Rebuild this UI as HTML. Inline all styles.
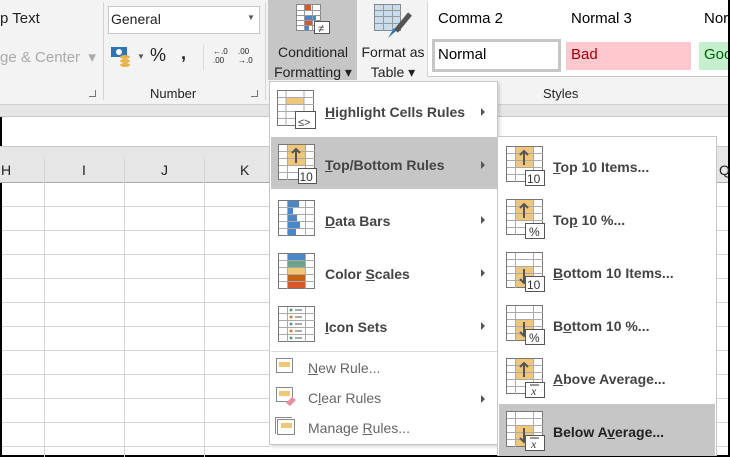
<!DOCTYPE html>
<html><head><meta charset="utf-8"><style>
*{margin:0;padding:0;box-sizing:border-box}
body{width:730px;height:457px;overflow:hidden;position:relative;background:#fff;font-family:"Segoe UI","Liberation Sans",sans-serif;color:#222}
.a{position:absolute}
.t{position:absolute;white-space:nowrap}
.mi{position:absolute;font-weight:bold;font-size:14px;color:#444;white-space:nowrap}
.mi u{text-decoration:underline}
.sm{position:absolute;font-size:14px;color:#666;white-space:nowrap}
.arr{position:absolute;width:0;height:0;border-left:4px solid #555;border-top:4px solid transparent;border-bottom:4px solid transparent}
</style></head><body>
<!-- ribbon -->
<div class="a" style="left:0;top:0;width:730px;height:105px;background:#f3f3f3"></div>
<div class="a" style="left:428px;top:0;width:302px;height:77px;background:#fff;border-bottom:1px solid #c6c6c6"></div>
<div class="a" style="left:103px;top:2px;width:1px;height:98px;background:#d5d5d5"></div>
<div class="a" style="left:265px;top:2px;width:1px;height:98px;background:#d5d5d5"></div>
<div class="a" style="left:427px;top:2px;width:1px;height:75px;background:#d5d5d5"></div>
<div class="t" style="left:0;top:10px;font-size:15px">p Text</div>
<div class="t" style="left:0;top:48px;font-size:15px;color:#aaa">ge &amp; Center &nbsp;▾</div>
<div class="a" style="left:89px;top:90px;width:7px;height:7px;border-right:1px solid #777;border-bottom:1px solid #777"></div>
<div class="a" style="left:108px;top:6px;width:152px;height:28px;background:#fff;border:1px solid #c6c6c6"></div>
<div class="t" style="left:111px;top:11px;font-size:14px">General</div>
<div class="t" style="left:247px;top:13px;font-size:8px;color:#555">▼</div>
<svg class="a" style="left:110px;top:44px" width="26" height="24"><rect x="1" y="3" width="16" height="10" fill="#2e74b5"/><circle cx="9" cy="8" r="3" fill="#fff"/><ellipse cx="15" cy="13" rx="5" ry="2" fill="#e8b34a"/><ellipse cx="15" cy="17" rx="5" ry="2" fill="#e8b34a"/><ellipse cx="15" cy="21" rx="5" ry="2" fill="#e8b34a"/></svg>
<div class="t" style="left:137px;top:52px;font-size:8px;color:#555">▼</div>
<div class="t" style="left:150px;top:45px;font-size:18px">%</div>
<div class="t" style="left:181px;top:43px;font-size:18px;font-weight:bold">,</div>
<div class="a" style="left:203px;top:45px;width:1px;height:25px;background:#ddd"></div>
<div class="t" style="left:213px;top:47px;font-size:8px;line-height:9px">←.0<br>.00</div>
<div class="t" style="left:238px;top:47px;font-size:8px;line-height:9px">.00<br>→.0</div>
<div class="t" style="left:150px;top:86px;font-size:13px">Number</div>
<div class="a" style="left:251px;top:90px;width:7px;height:7px;border-right:1px solid #777;border-bottom:1px solid #777"></div>
<!-- CF button -->
<div class="a" style="left:268px;top:0;width:89px;height:80px;background:#c6c6c6"></div>
<svg class="a" style="left:296px;top:4px" width="38" height="31"><g fill="#fff" stroke="#888"><rect x="0.5" y="0.5" width="24" height="26"/></g><rect x="9" y="1" width="6" height="5" fill="#d9582b"/><rect x="9" y="11" width="11" height="5" fill="#4a86c8"/><rect x="9" y="16" width="7" height="5" fill="#d9582b"/><rect x="9" y="21" width="4" height="5" fill="#4a86c8"/><g stroke="#999"><path d="M8.5 1v26M16.5 1v26M1 6.5h24M1 11.5h24M1 16.5h24M1 21.5h24"/></g><rect x="18.5" y="17.5" width="15" height="12" fill="#fff" stroke="#555"/><text x="22" y="28" font-size="11" fill="#333" font-family="Liberation Sans">≠</text></svg>
<div class="t" style="left:273px;top:42px;font-size:14px;line-height:20px;text-align:center;width:80px">Conditional<br>Formatting ▾</div>
<svg class="a" style="left:374px;top:4px" width="40" height="36"><rect x="0.5" y="0.5" width="26" height="26" fill="#c9dcee" stroke="#888"/><g stroke="#999"><path d="M9.5 1v26M18.5 1v26M1 6.5h26M1 12.5h26M1 19.5h26"/></g><path d="M36 10 L22 27" stroke="#555" stroke-width="5"/><path d="M22 27 L14 34 L20 24Z" fill="#2e74b5"/></svg>
<div class="t" style="left:359px;top:42px;font-size:14px;line-height:20px;text-align:center;width:68px">Format as<br>Table ▾</div>
<!-- styles -->
<div class="t" style="left:438px;top:10px;font-size:15px;color:#000">Comma 2</div>
<div class="t" style="left:571px;top:10px;font-size:15px;color:#000">Normal 3</div>
<div class="t" style="left:704px;top:10px;font-size:15px;color:#000">Nor</div>
<div class="a" style="left:432px;top:39px;width:129px;height:33px;border:3px solid #c6c6c6;background:#fff"></div>
<div class="t" style="left:438px;top:46px;font-size:15px;color:#000">Normal</div>
<div class="a" style="left:566px;top:42px;width:125px;height:28px;background:#ffc7ce"></div>
<div class="t" style="left:571px;top:46px;font-size:15px;color:#9c0006">Bad</div>
<div class="a" style="left:699px;top:42px;width:31px;height:28px;background:#c6efce"></div>
<div class="t" style="left:704px;top:46px;font-size:15px;color:#006100">Goo</div>
<div class="t" style="left:543px;top:86px;font-size:13px">Styles</div>
<!-- strips -->
<div class="a" style="left:0;top:104px;width:730px;height:13px;background:#e6e6e6;border-top:1px solid #d0d0d0;border-bottom:1px solid #c6c6c6"></div>
<div class="a" style="left:0;top:117px;width:2px;height:340px;background:#000"></div>
<div class="a" style="left:728px;top:0;width:2px;height:457px;background:#000"></div>
<div class="a" style="left:0;top:455px;width:730px;height:2px;background:#000"></div>
<div class="a" style="left:0;top:146px;width:728px;height:37px;background:#e6e6e6;border-top:1px solid #c6c6c6;border-bottom:1px solid #aaa"></div>
<div class="t" style="left:1px;top:162px;font-size:14px">H</div>
<div class="t" style="left:82px;top:162px;font-size:14px">I</div>
<div class="t" style="left:161px;top:162px;font-size:14px">J</div>
<div class="t" style="left:240px;top:162px;font-size:14px">K</div>
<div class="t" style="left:719px;top:162px;font-size:14px">Q</div>
<div class="a" style="left:44px;top:159px;width:1px;height:298px;background:#d4d4d4"></div>
<div class="a" style="left:124px;top:159px;width:1px;height:298px;background:#d4d4d4"></div>
<div class="a" style="left:204px;top:159px;width:1px;height:298px;background:#d4d4d4"></div>
<div class="a" style="left:2px;top:183px;width:268px;height:272px;background:repeating-linear-gradient(to bottom,transparent 0,transparent 23px,#d4d4d4 23px,#d4d4d4 24px)"></div>
<div class="a" style="left:716px;top:183px;width:12px;height:272px;background:repeating-linear-gradient(to bottom,transparent 0,transparent 23px,#d4d4d4 23px,#d4d4d4 24px)"></div>
<!-- menu 1 -->
<div class="a" style="left:269px;top:81px;width:229px;height:364px;background:#fff;border:1px solid #c6c6c6;box-shadow:2px 2px 3px rgba(0,0,0,.15)"></div>
<div class="a" style="left:271px;top:137px;width:227px;height:52px;background:#c6c6c6"></div>
<svg class="a" style="left:277px;top:90px" width="40" height="40"><rect x="0.5" y="0.5" width="36" height="35" fill="#fff" stroke="#777"/><rect x="9" y="7" width="18" height="7" fill="#f0c77a"/><g stroke="#aaa"><path d="M9 1v35M27 1v35M1 7.5h36M1 14.5h36M1 21.5h36M1 28.5h36"/></g><rect x="18.5" y="21.5" width="20" height="17" fill="#fff" stroke="#555"/><text x="21" y="36" font-size="11" fill="#444">≤&gt;</text></svg>
<div class="mi" style="left:325px;top:104px"><u>H</u>ighlight Cells Rules</div><div class="arr" style="left:481px;top:108px"></div>
<svg class="a" style="left:278px;top:144px" width="40" height="40"><rect x="0.5" y="0.5" width="36" height="35" fill="#fff" stroke="#777"/><rect x="10" y="1" width="17" height="20" fill="#f0c77a"/><g stroke="#aaa"><path d="M9.5 1v35M27.5 1v35M1 7.5h36M1 14.5h36M1 21.5h36M1 28.5h36"/></g><path d="M18 19V5M14 9l4-4 4 4" stroke="#555" stroke-width="2" fill="none"/><rect x="20.5" y="24.5" width="18" height="15" fill="#fff" stroke="#555"/><text x="21.5" y="37" font-size="12" fill="#333">10</text></svg>
<div class="mi" style="left:325px;top:157px"><u>T</u>op/Bottom Rules</div><div class="arr" style="left:481px;top:161px"></div>
<svg class="a" style="left:278px;top:200px" width="38" height="38"><rect x="0.5" y="0.5" width="36" height="35" fill="#fff" stroke="#777"/><g fill="#4a86c8"><rect x="10" y="1" width="11" height="6"/><rect x="10" y="8" width="5" height="6"/><rect x="10" y="15" width="9" height="6"/><rect x="10" y="22" width="12" height="6"/><rect x="10" y="29" width="8" height="6"/></g><g stroke="#aaa"><path d="M9.5 1v35M27.5 1v35M1 7.5h36M1 14.5h36M1 21.5h36M1 28.5h36"/></g></svg>
<div class="mi" style="left:325px;top:213px"><u>D</u>ata Bars</div><div class="arr" style="left:481px;top:216px"></div>
<svg class="a" style="left:278px;top:253px" width="38" height="38"><rect x="0.5" y="0.5" width="36" height="35" fill="#fff" stroke="#777"/><rect x="10" y="1" width="17" height="6" fill="#4a86c8"/><rect x="10" y="8" width="17" height="6" fill="#6aa58a"/><rect x="10" y="15" width="17" height="6" fill="#f0c77a"/><rect x="10" y="22" width="17" height="6" fill="#c8620e"/><rect x="10" y="29" width="17" height="6" fill="#d9582b"/><g stroke="#aaa"><path d="M9.5 1v35M27.5 1v35M1 7.5h36M1 14.5h36M1 21.5h36M1 28.5h36"/></g></svg>
<div class="mi" style="left:325px;top:266px">Color <u>S</u>cales</div><div class="arr" style="left:481px;top:269px"></div>
<svg class="a" style="left:278px;top:306px" width="38" height="38"><rect x="0.5" y="0.5" width="36" height="35" fill="#fff" stroke="#777"/><g stroke="#aaa"><path d="M9.5 1v35M27.5 1v35M1 7.5h36M1 14.5h36M1 21.5h36M1 28.5h36"/></g><g><circle cx="13" cy="4" r="1.5" fill="#5a9a8a"/><circle cx="13" cy="11" r="1.5" fill="#d9822b"/><circle cx="13" cy="18" r="1.5" fill="#5a9a8a"/><circle cx="13" cy="25" r="1.5" fill="#d9822b"/><circle cx="13" cy="32" r="1.5" fill="#5a9a8a"/></g><g stroke="#555"><path d="M17 4h7M17 11h7M17 18h7M17 25h7M17 32h7"/></g></svg>
<div class="mi" style="left:325px;top:319px"><u>I</u>con Sets</div><div class="arr" style="left:481px;top:322px"></div>
<div class="a" style="left:271px;top:351px;width:226px;height:1px;background:#ddd"></div>
<svg class="a" style="left:276px;top:358px" width="20" height="20"><rect x="0.5" y="0.5" width="16" height="14" fill="#fff" stroke="#888"/><rect x="3" y="4" width="11" height="5" fill="#f0c77a"/></svg>
<div class="sm" style="left:308px;top:360px"><u>N</u>ew Rule...</div>
<svg class="a" style="left:276px;top:387px" width="22" height="20"><rect x="0.5" y="0.5" width="16" height="14" fill="#fff" stroke="#888"/><rect x="3" y="4" width="11" height="5" fill="#f0c77a"/><path d="M10 16l6-6 4 3-6 6z" fill="#ea8fa0"/></svg>
<div class="sm" style="left:308px;top:390px">C<u>l</u>ear Rules</div><div class="arr" style="left:481px;top:395px"></div>
<svg class="a" style="left:275px;top:417px" width="22" height="20"><rect x="2.5" y="2.5" width="17" height="15" fill="#fff" stroke="#888"/><path d="M0.5 17V0.5H17" fill="none" stroke="#888"/><rect x="6" y="6" width="11" height="5" fill="#f0c77a"/></svg>
<div class="sm" style="left:308px;top:420px">Manage <u>R</u>ules...</div>
<!-- submenu -->
<div class="a" style="left:497px;top:136px;width:220px;height:320px;background:#fff;border:1px solid #c6c6c6"></div>
<div class="a" style="left:499px;top:404px;width:216px;height:51px;background:#c6c6c6"></div>
<svg width="0" height="0" style="position:absolute"><defs>
<g id="gu"><rect x="0.5" y="0.5" width="36" height="35" fill="#fff" stroke="#777"/><rect x="10" y="1" width="17" height="20" fill="#f0c77a"/><g stroke="#aaa"><path d="M9.5 1v35M27.5 1v35M1 7.5h36M1 14.5h36M1 21.5h36M1 28.5h36"/></g><path d="M18 19V5M14 9l4-4 4 4" stroke="#555" stroke-width="2" fill="none"/></g>
<g id="gd"><rect x="0.5" y="0.5" width="36" height="35" fill="#fff" stroke="#777"/><rect x="10" y="15" width="17" height="20" fill="#f0c77a"/><g stroke="#aaa"><path d="M9.5 1v35M27.5 1v35M1 7.5h36M1 14.5h36M1 21.5h36M1 28.5h36"/></g><path d="M18 17v14M14 27l4 4 4-4" stroke="#555" stroke-width="2" fill="none"/></g>
</defs></svg>
<svg class="a" style="left:506px;top:146px" width="40" height="40"><use href="#gu"/><rect x="19.5" y="24.5" width="19" height="15" fill="#fff" stroke="#555"/><text x="21" y="37" font-size="12" fill="#333">10</text></svg>
<div class="mi" style="left:553px;top:159px"><u>T</u>op 10 Items...</div>
<svg class="a" style="left:506px;top:199px" width="40" height="40"><use href="#gu"/><rect x="19.5" y="24.5" width="19" height="15" fill="#fff" stroke="#555"/><text x="23" y="37" font-size="12" fill="#333">%</text></svg>
<div class="mi" style="left:553px;top:212px">To<u>p</u> 10 %...</div>
<svg class="a" style="left:506px;top:252px" width="40" height="40"><use href="#gd"/><rect x="19.5" y="24.5" width="19" height="15" fill="#fff" stroke="#555"/><text x="21" y="37" font-size="12" fill="#333">10</text></svg>
<div class="mi" style="left:553px;top:265px"><u>B</u>ottom 10 Items...</div>
<svg class="a" style="left:506px;top:305px" width="40" height="40"><use href="#gd"/><rect x="19.5" y="24.5" width="19" height="15" fill="#fff" stroke="#555"/><text x="23" y="37" font-size="12" fill="#333">%</text></svg>
<div class="mi" style="left:553px;top:318px">B<u>o</u>ttom 10 %...</div>
<svg class="a" style="left:506px;top:358px" width="40" height="40"><use href="#gu"/><rect x="19.5" y="24.5" width="19" height="15" fill="#fff" stroke="#555"/><text x="25" y="37" font-size="12" font-style="italic" font-family="Liberation Serif" fill="#333">x</text><path d="M24 27h9" stroke="#333"/></svg>
<div class="mi" style="left:553px;top:371px"><u>A</u>bove Average...</div>
<svg class="a" style="left:506px;top:411px" width="40" height="40"><use href="#gd"/><rect x="19.5" y="24.5" width="19" height="15" fill="#fff" stroke="#555"/><text x="25" y="37" font-size="12" font-style="italic" font-family="Liberation Serif" fill="#333">x</text><path d="M24 27h9" stroke="#333"/></svg>
<div class="mi" style="left:553px;top:424px;color:#222">Below A<u>v</u>erage...</div>
</body></html>
